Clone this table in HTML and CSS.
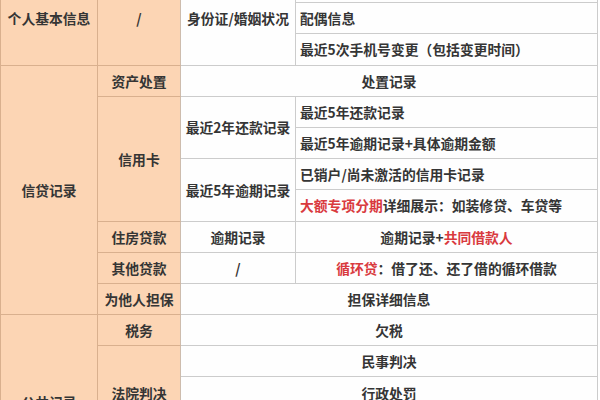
FILE: index.html
```html
<!DOCTYPE html>
<html lang="zh-CN">
<head>
<meta charset="utf-8">
<link rel="stylesheet" href="styles.css">
</head>
<body>
<table class="report">
  <colgroup>
    <col class="w1"><col class="w2"><col class="w3"><col class="w4">
  </colgroup>
  <tbody>
    <tr>
      <td class="head" rowspan="3">个人基本信息</td>
      <td class="sub" rowspan="3">/</td>
      <td class="mid" rowspan="3">身份证/婚姻状况</td>
      <td class="det"></td>
    </tr>
    <tr><td class="det">配偶信息</td></tr>
    <tr><td class="det">最近5次手机号变更（包括变更时间）</td></tr>

    <tr>
      <td class="head" rowspan="8">信贷记录</td>
      <td class="sub">资产处置</td>
      <td class="wide" colspan="2">处置记录</td>
    </tr>
    <tr>
      <td class="sub" rowspan="4">信用卡</td>
      <td class="mid" rowspan="2">最近2年还款记录</td>
      <td class="det">最近5年还款记录</td>
    </tr>
    <tr><td class="det">最近5年逾期记录+具体逾期金额</td></tr>
    <tr>
      <td class="mid" rowspan="2">最近5年逾期记录</td>
      <td class="det">已销户/尚未激活的信用卡记录</td>
    </tr>
    <tr><td class="det"><span class="hl">大额专项分期</span>详细展示：如装修贷、车贷等</td></tr>
    <tr>
      <td class="sub">住房贷款</td>
      <td class="mid">逾期记录</td>
      <td class="det center">逾期记录+<span class="hl">共同借款人</span></td>
    </tr>
    <tr>
      <td class="sub">其他贷款</td>
      <td class="mid">/</td>
      <td class="det center"><span class="hl">循环贷</span>：借了还、还了借的循环借款</td>
    </tr>
    <tr>
      <td class="sub">为他人担保</td>
      <td class="wide" colspan="2">担保详细信息</td>
    </tr>

    <tr>
      <td class="head pub" rowspan="6">公共记录</td>
      <td class="sub">税务</td>
      <td class="wide" colspan="2">欠税</td>
    </tr>
    <tr>
      <td class="sub court" rowspan="3">法院判决</td>
      <td class="wide" colspan="2">民事判决</td>
    </tr>
    <tr><td class="wide" colspan="2">行政处罚</td></tr>
    <tr><td class="wide" colspan="2"></td></tr>
    <tr>
      <td class="sub"></td>
      <td class="wide" colspan="2"></td>
    </tr>
    <tr>
      <td class="sub"></td>
      <td class="wide" colspan="2"></td>
    </tr>
  </tbody>
</table>
</body>
</html>
```
FILE: styles.css
```css
html, body {
  margin: 0;
  padding: 0;
  background: #ffffff;
}

body {
  font-family: "Noto Sans CJK SC", "Noto Sans", sans-serif;
  font-size: 13.8px;
  font-weight: 600;
  color: #353535;
  overflow: hidden;
}

.report {
  table-layout: fixed;
  width: 598px;
  margin-top: -29px;
  border-collapse: separate;
  border-spacing: 0;
  border-top: 1px solid #cccccc;
  border-left: 1px solid #d9b08e;
}

.w1 { width: 97px; }
.w2 { width: 83px; }
.w3 { width: 115px; }
.w4 { width: 302px; }

.report tr {
  height: 31.2px;
}

.report td {
  padding: 0;
  line-height: 20px;
  text-align: center;
  vertical-align: middle;
  white-space: nowrap;
  border-right: 1px solid #cccccc;
  border-bottom: 1px solid #cccccc;
  background: #fefefe;
}

.report td.head,
.report td.sub {
  background: #fcd5b4;
  border-bottom-color: #d9b08e;
}

.report td.head {
  border-right-color: #d9b08e;
}

.report td.sub {
  border-right-color: #cdbcad;
}

.report td.det {
  text-align: left;
  padding-left: 4px;
}

.report td.det.center {
  text-align: center;
  padding-left: 0;
}

.report td.pub {
  padding-bottom: 12px;
}

.hl {
  color: #d93a3e;
}
```
